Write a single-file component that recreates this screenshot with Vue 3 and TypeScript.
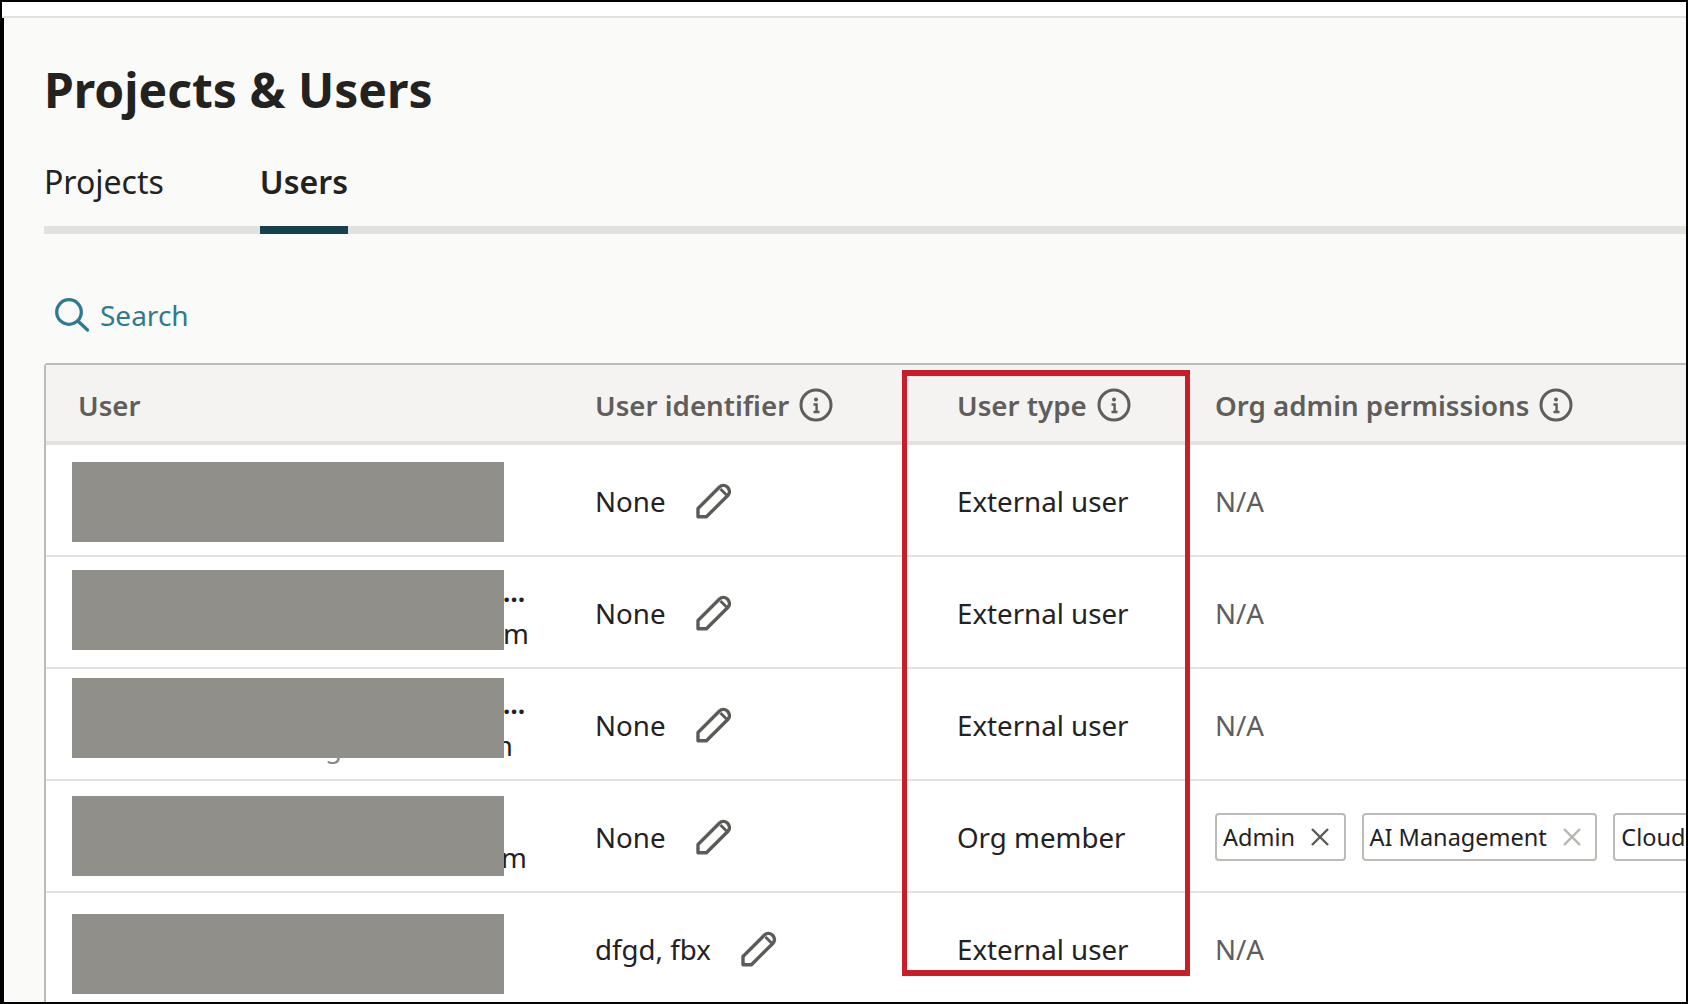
<script setup lang="ts">
interface TailLine { text: string; shift: number }
interface Row {
  redactTop: number
  tail: TailLine[]
  identifier: string
  type: string
  perms: { label: string; muted: boolean }[]
}

const rows: Row[] = [
  { redactTop: 17, tail: [], identifier: 'None', type: 'External user', perms: [] },
  { redactTop: 13, tail: [{ text: '…', shift: 0 }, { text: 'm', shift: 0 }], identifier: 'None', type: 'External user', perms: [] },
  { redactTop: 9, tail: [{ text: '…', shift: 0 }, { text: 'm', shift: -16 }], identifier: 'None', type: 'External user', perms: [] },
  {
    redactTop: 15,
    tail: [{ text: '\u00a0', shift: 0 }, { text: 'm', shift: -2 }],
    identifier: 'None',
    type: 'Org member',
    perms: [
      { label: 'Admin', muted: false },
      { label: 'AI Management', muted: true },
      { label: 'Cloud', muted: false }
    ]
  },
  { redactTop: 21, tail: [], identifier: 'dfgd, fbx', type: 'External user', perms: [] }
]
</script>

<template>
  <div class="frame">
    <div class="topstrip"></div>
    <main class="page">
      <h1 class="title">Projects &amp; Users</h1>
      <nav class="tabs">
        <span class="tab">Projects</span>
        <span class="tab active">Users</span>
      </nav>
      <div class="search">
        <svg class="search-icon" viewBox="0 0 34 34" fill="none" stroke="currentColor" stroke-width="3.3" stroke-linecap="round">
          <circle cx="14" cy="14" r="12.3" />
          <path d="M23.5 23.5 L32.5 32" />
        </svg>
        <span>Search</span>
      </div>
      <section class="table">
        <div class="head">
          <div class="hcell first">User</div>
          <div class="hcell">User identifier
            <svg class="info" viewBox="0 0 34 34" fill="none" stroke="currentColor" stroke-width="3"><circle cx="17" cy="17" r="15" /><circle cx="17" cy="11.5" r="2" fill="currentColor" stroke="none" /><path d="M14.5 16.5 H17.6 V24 M14.5 24 H20.5" stroke-width="2.4" /></svg>
          </div>
          <div class="hcell">User type
            <svg class="info" viewBox="0 0 34 34" fill="none" stroke="currentColor" stroke-width="3"><circle cx="17" cy="17" r="15" /><circle cx="17" cy="11.5" r="2" fill="currentColor" stroke="none" /><path d="M14.5 16.5 H17.6 V24 M14.5 24 H20.5" stroke-width="2.4" /></svg>
          </div>
          <div class="hcell">Org admin permissions
            <svg class="info" viewBox="0 0 34 34" fill="none" stroke="currentColor" stroke-width="3"><circle cx="17" cy="17" r="15" /><circle cx="17" cy="11.5" r="2" fill="currentColor" stroke="none" /><path d="M14.5 16.5 H17.6 V24 M14.5 24 H20.5" stroke-width="2.4" /></svg>
          </div>
        </div>
        <div v-for="(row, i) in rows" :key="i" class="row">
          <div class="cell user">
            <div
              v-for="(line, j) in row.tail"
              :key="j"
              class="tail-line"
              :class="{ dots: line.text === '…' }"
              :style="{ marginLeft: line.shift + 'px' }"
            >{{ line.text }}</div>
            <span v-if="i === 2" class="stray">g</span>
            <div class="redact" :style="{ top: row.redactTop + 'px' }"></div>
          </div>
          <div class="cell ident">
            <span>{{ row.identifier }}</span>
            <svg class="pencil" viewBox="0 0 36 36" fill="none" stroke="currentColor" stroke-width="3.4" stroke-linejoin="round">
              <path d="M2 33.8 V25.5 L23.5 4 C25.8 1.7 29.4 2 31.6 4.2 C33.9 6.5 34.2 10 32 12.2 L10.4 33.8 Z" />
              <path d="M24.5 6 L30.5 12" stroke-width="2.8" />
            </svg>
          </div>
          <div class="cell">{{ row.type }}</div>
          <div class="cell perms">
            <span v-if="!row.perms.length" class="na">N/A</span>
            <span v-for="p in row.perms" :key="p.label" class="tag">
              {{ p.label }}
              <svg class="x" :class="{ muted: p.muted }" viewBox="0 0 18 18" fill="none" stroke="currentColor" stroke-width="2.4"><path d="M1 1 L17 17 M17 1 L1 17" /></svg>
            </span>
          </div>
        </div>
      </section>
    </main>
    <div class="highlight"></div>
  </div>
</template>

<style>
html, body { margin: 0; padding: 0; background: #000; }
</style>

<style scoped>
.frame {
  position: relative;
  width: 1688px;
  height: 1004px;
  box-sizing: border-box;
  border: 2px solid #000;
  overflow: hidden;
  background: #fafaf8;
  font-family: "Noto Sans", "Open Sans", sans-serif;
  color: #23221f;
}
.topstrip {
  height: 14px;
  background: #fff;
  border-bottom: 2px solid #e2e1de;
}
.page {
  border-left: 2px solid #000;
  padding-left: 40px;
  height: 986px;
  box-sizing: border-box;
  overflow: hidden;
}
.title {
  margin: 40px 0 38px;
  font-size: 48px;
  line-height: 64px;
  font-weight: 700;
  color: #23221f;
}
.tabs {
  display: flex;
  gap: 96px;
  border-bottom: 8px solid #e2e1de;
}
.tab {
  font-size: 32px;
  line-height: 42px;
  padding-top: 1px;
  padding-bottom: 23px;
  margin-bottom: -8px;
  border-bottom: 8px solid transparent;
}
.tab.active {
  font-weight: 600;
  border-bottom-color: #17404f;
}
.search {
  display: flex;
  align-items: center;
  gap: 11px;
  margin: 64px 0 31px 11px;
  height: 34px;
  font-size: 28px;
  line-height: 36px;
  color: #2f7a90;
}
.search-icon { width: 34px; height: 34px; flex: none; }
.table {
  border-left: 2px solid #bcbbb6;
  border-top: 2px solid #bcbbb6;
  border-top-left-radius: 4px;
  background: #fff;
}
.head, .row {
  display: grid;
  grid-template-columns: 549px 362px 258px 1fr;
}
.head {
  height: 80px;
  box-sizing: border-box;
  background: #f4f3f1;
  border-bottom: 4px solid #e2e1de;
}
.hcell {
  display: flex;
  align-items: center;
  gap: 10px;
  padding-top: 4px;
  font-size: 27.7px;
  font-weight: 600;
  color: #5f5e5a;
  white-space: nowrap;
}
.hcell.first { padding-left: 32px; }
.info { width: 34px; height: 34px; flex: none; color: #5f5e5a; }
.row {
  height: 112px;
  box-sizing: border-box;
  border-bottom: 2px solid #e2e1de;
}
.cell {
  display: flex;
  align-items: center;
  padding-top: 1px;
  font-size: 27.7px;
  line-height: 36px;
  white-space: nowrap;
}
.cell.user {
  position: relative;
  flex-direction: column;
  align-items: flex-start;
  justify-content: center;
  padding-left: 457px;
  line-height: 41px;
}
.tail-line { line-height: 41px; }
.tail-line.dots { font-weight: 700; font-size: 26px; }
.stray {
  position: absolute;
  left: 279px;
  top: 57px;
  color: #8a8a86;
}
.redact {
  position: absolute;
  left: 26px;
  width: 432px;
  height: 80px;
  background: #918f89;
}
.ident { gap: 30px; }
.pencil { width: 36px; height: 36px; flex: none; color: #5c5b57; }
.perms { gap: 16px; }
.na { color: #5f5e5a; }
.tag {
  display: inline-flex;
  align-items: center;
  gap: 16px;
  height: 48px;
  box-sizing: border-box;
  padding: 0 14.5px 0 6px;
  border: 2px solid #bcbbb6;
  border-radius: 4px;
  font-size: 23.5px;
  flex: none;
}
.x { width: 18px; height: 18px; color: #5c5b57; }
.x.muted { color: #b5b4ae; }
.highlight {
  position: absolute;
  left: 900px;
  top: 368px;
  width: 288px;
  height: 606px;
  box-sizing: border-box;
  border: solid #c91d2a;
  border-width: 6px 5px;
}
</style>
